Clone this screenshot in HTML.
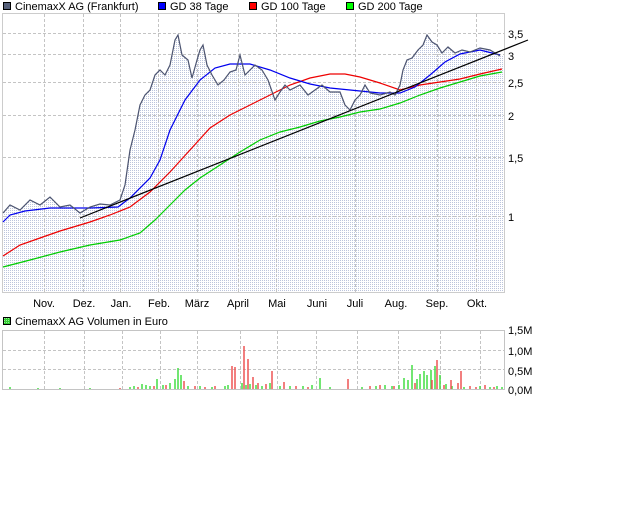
<!DOCTYPE html>
<html><head><meta charset="utf-8"><style>
body{margin:0;background:#fff;width:640px;height:512px;overflow:hidden}
svg{display:block}
text{font-family:"Liberation Sans",sans-serif;font-size:11px;fill:#000}
</style></head><body>
<svg width="640" height="512" viewBox="0 0 640 512">
<defs>
<pattern id="dp" width="2" height="2" patternUnits="userSpaceOnUse"><rect width="2" height="2" fill="#fff"/><rect width="1" height="1" fill="#bcc4dc"/></pattern>
<pattern id="gp" width="2" height="2" patternUnits="userSpaceOnUse"><rect width="2" height="2" fill="#3c3"/><rect width="1" height="1" fill="#9e9"/></pattern>
</defs>
<rect x="3.5" y="2.5" width="7" height="7" fill="#56607a" stroke="#000"/>
<text x="15" y="10">CinemaxX AG (Frankfurt)</text>
<rect x="158.5" y="2.5" width="7" height="7" fill="#00f" stroke="#000"/>
<text x="170" y="10">GD 38 Tage</text>
<rect x="249.5" y="2.5" width="7" height="7" fill="#f00" stroke="#000"/>
<text x="261" y="10">GD 100 Tage</text>
<rect x="346.5" y="2.5" width="7" height="7" fill="#0f0" stroke="#000"/>
<text x="358" y="10">GD 200 Tage</text>
<rect x="2.5" y="13.5" width="502" height="279" fill="#fff" stroke="#ccc"/>
<polygon fill="url(#dp)" points="3,292 3,213 10,205 20,210 30,200 40,205 50,197 60,207 70,205 80,213 90,207 100,204 110,205 120,200 125,185 130,150 135,130 140,105 145,95 150,90 155,75 160,70 165,75 170,65 175,40 178,35 182,55 188,60 192,78 197,60 200,50 203,45 207,65 212,75 218,85 224,80 230,72 236,70 240,55 245,75 250,70 255,65 262,70 268,80 275,100 280,92 285,85 290,90 300,85 308,95 315,90 322,85 330,92 340,92 345,105 350,110 355,100 360,95 365,85 370,93 380,95 390,92 395,95 400,85 403,70 407,60 412,58 418,50 423,45 427,35 432,42 437,45 442,53 448,47 455,53 462,50 470,52 480,48 490,50 500,56 504,56 504,292"/>
<g stroke="#c4c4c4" stroke-dasharray="3,2" stroke-width="1">
<line x1="3" y1="33.5" x2="504" y2="33.5"/><line x1="3" y1="54.5" x2="504" y2="54.5"/><line x1="3" y1="82.5" x2="504" y2="82.5"/><line x1="3" y1="115.5" x2="504" y2="115.5"/><line x1="3" y1="157.5" x2="504" y2="157.5"/><line x1="3" y1="216.5" x2="504" y2="216.5"/>
<line x1="44.5" y1="14" x2="44.5" y2="292"/><line x1="83.5" y1="14" x2="83.5" y2="292"/><line x1="120.5" y1="14" x2="120.5" y2="292"/><line x1="158.5" y1="14" x2="158.5" y2="292"/><line x1="197.5" y1="14" x2="197.5" y2="292"/><line x1="238.5" y1="14" x2="238.5" y2="292"/><line x1="276.5" y1="14" x2="276.5" y2="292"/><line x1="355.5" y1="14" x2="355.5" y2="292"/><line x1="437.5" y1="14" x2="437.5" y2="292"/><line x1="476.5" y1="14" x2="476.5" y2="292"/>
</g>
<g fill="none" stroke-width="1.2">
<polyline stroke="#0c0" points="3,267 30,260 60,252 90,245 120,240 140,233 155,220 170,205 185,190 200,178 220,165 240,152 260,140 280,132 300,127 320,121 340,117 360,112 380,109 400,103 420,95 440,88 460,82 480,76 502,72"/>
<polyline stroke="#e00" points="3,256 20,245 40,238 60,231 90,222 110,215 130,207 150,192 170,172 190,150 210,128 230,115 250,105 270,95 290,85 310,78 330,74 345,74 360,77 380,83 400,90 420,85 440,82 460,79 480,74 502,69"/>
<polyline stroke="#00e" points="3,222 10,215 25,211 50,208 90,208 118,207 130,198 150,178 160,160 170,130 185,100 200,80 215,68 230,64 250,64 270,70 290,78 310,84 330,88 350,90 380,93 400,93 415,87 430,75 445,62 460,54 480,50 500,55"/>
<polyline stroke="#4c5470" points="3,213 10,205 20,210 30,200 40,205 50,197 60,207 70,205 80,213 90,207 100,204 110,205 120,200 125,185 130,150 135,130 140,105 145,95 150,90 155,75 160,70 165,75 170,65 175,40 178,35 182,55 188,60 192,78 197,60 200,50 203,45 207,65 212,75 218,85 224,80 230,72 236,70 240,55 245,75 250,70 255,65 262,70 268,80 275,100 280,92 285,85 290,90 300,85 308,95 315,90 322,85 330,92 340,92 345,105 350,110 355,100 360,95 365,85 370,93 380,95 390,92 395,95 400,85 403,70 407,60 412,58 418,50 423,45 427,35 432,42 437,45 442,53 448,47 455,53 462,50 470,52 480,48 490,50 500,56"/>
<line stroke="#000" x1="80" y1="218" x2="528" y2="40"/>
</g>
<text x="508" y="38">3,5</text><text x="508" y="60">3</text><text x="508" y="87">2,5</text><text x="508" y="120">2</text><text x="508" y="162">1,5</text><text x="508" y="221">1</text>
<g text-anchor="middle">
<text x="44" y="307">Nov.</text><text x="84" y="307">Dez.</text><text x="121" y="307">Jan.</text><text x="159" y="307">Feb.</text><text x="197" y="307">März</text><text x="238" y="307">April</text><text x="277" y="307">Mai</text><text x="317" y="307">Juni</text><text x="355" y="307">Juli</text><text x="396" y="307">Aug.</text><text x="437" y="307">Sep.</text><text x="477" y="307">Okt.</text>
</g>
<rect x="3.5" y="317.5" width="7" height="7" fill="url(#gp)" stroke="#000"/>
<text x="15" y="325">CinemaxX AG Volumen in Euro</text>
<rect x="2.5" y="330.5" width="502" height="59" fill="#fff" stroke="#c4c4c4"/>
<g stroke="#c4c4c4" stroke-dasharray="3,2">
<line x1="3" y1="350.5" x2="504" y2="350.5"/><line x1="3" y1="369.5" x2="504" y2="369.5"/>
<line x1="44.5" y1="331" x2="44.5" y2="389"/><line x1="84.5" y1="331" x2="84.5" y2="389"/><line x1="122.5" y1="331" x2="122.5" y2="389"/><line x1="160.5" y1="331" x2="160.5" y2="389"/><line x1="197.5" y1="331" x2="197.5" y2="389"/><line x1="240.5" y1="331" x2="240.5" y2="389"/><line x1="277.5" y1="331" x2="277.5" y2="389"/><line x1="316.5" y1="331" x2="316.5" y2="389"/><line x1="357.5" y1="331" x2="357.5" y2="389"/><line x1="398.5" y1="331" x2="398.5" y2="389"/><line x1="440.5" y1="331" x2="440.5" y2="389"/><line x1="480.5" y1="331" x2="480.5" y2="389"/>
</g>
<g stroke-width="1.5">
<g stroke="#4d4">
<path d="M10 389v-2M38 389v-1M60 389v-1M90 389v-1M130 389v-2M134 389v-3M142 389v-5M146 389v-4M150 389v-3M157 389v-10M163 389v-4M170 389v-6M175 389v-10M178 389v-21M181 389v-14M188 389v-3M200 389v-3M212 389v-2M225 389v-3M228 389v-4M242 389v-6M246 389v-4M250 389v-5M256 389v-4M262 389v-3M270 389v-6M280 389v-3M290 389v-3M303 389v-3M312 389v-4M320 389v-11M330 389v-2M362 389v-2M376 389v-3M385 389v-4M392 389v-3M399 389v-4M404 389v-11M408 389v-9M412 389v-24M417 389v-10M420 389v-15M424 389v-18M427 389v-14M431 389v-19M435 389v-23M440 389v-14M446 389v-5M452 389v-3M464 389v-2M480 389v-3M490 389v-2M497 389v-3M502 389v-2"/>
</g>
<g stroke="#e55">
<path d="M120 389v-1M138 389v-2M154 389v-3M166 389v-4M184 389v-8M195 389v-3M205 389v-2M215 389v-3M232 389v-23M235 389v-22M244 389v-43M248 389v-30M253 389v-12M258 389v-6M266 389v-5M272 389v-18M284 389v-7M296 389v-3M308 389v-2M348 389v-10M370 389v-3M380 389v-4M394 389v-3M415 389v-6M432 389v-9M437 389v-29M444 389v-4M451 389v-9M458 389v-6M461 389v-18M470 389v-3M476 389v-2M485 389v-4M494 389v-2"/>
</g>
</g>
<text x="508" y="334">1,5M</text><text x="508" y="355">1,0M</text><text x="508" y="375">0,5M</text><text x="508" y="394">0,0M</text>
</svg>
</body></html>
